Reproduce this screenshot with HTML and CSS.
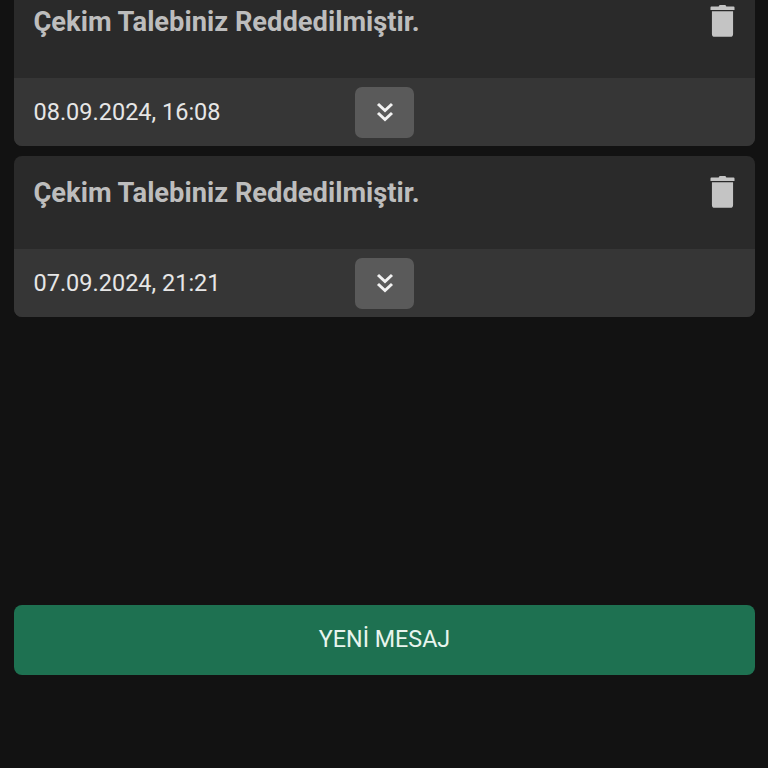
FILE: index.html
```html
<!DOCTYPE html>
<html lang="tr">
<head>
<meta charset="utf-8">
<title>Mesajlar</title>
<link rel="stylesheet" href="styles.css">
</head>
<body>
<main class="page">
  <section class="list">
    <article class="card">
      <div class="card-head">
        <h2 class="title">Çekim Talebiniz Reddedilmiştir.</h2>
        <svg class="trash" viewBox="0 0 26 34" aria-hidden="true"><path d="M9 2.500 10 1h6l1 1.500h7.500a1 1 0 0 1 1 1V6H.5V3.500a1 1 0 0 1 1-1zM2 7.500h22V31a3 3 0 0 1-3 3H5a3 3 0 0 1-3-3z"/></svg>
      </div>
      <div class="card-foot">
        <time class="date">08.09.2024, 16:08</time>
        <button class="expand" type="button" aria-label="Genişlet">
          <svg viewBox="0 0 18 20" aria-hidden="true"><path d="M2 2l7 6.500L16 2M2 11l7 6.500L16 11"/></svg>
        </button>
      </div>
    </article>
    <article class="card">
      <div class="card-head">
        <h2 class="title">Çekim Talebiniz Reddedilmiştir.</h2>
        <svg class="trash" viewBox="0 0 26 34" aria-hidden="true"><path d="M9 2.500 10 1h6l1 1.500h7.500a1 1 0 0 1 1 1V6H.5V3.500a1 1 0 0 1 1-1zM2 7.500h22V31a3 3 0 0 1-3 3H5a3 3 0 0 1-3-3z"/></svg>
      </div>
      <div class="card-foot">
        <time class="date">07.09.2024, 21:21</time>
        <button class="expand" type="button" aria-label="Genişlet">
          <svg viewBox="0 0 18 20" aria-hidden="true"><path d="M2 2l7 6.500L16 2M2 11l7 6.500L16 11"/></svg>
        </button>
      </div>
    </article>
  </section>
  <button class="new-message" type="button">YENİ MESAJ</button>
</main>
</body>
</html>
```
FILE: styles.css
```css
* { box-sizing: border-box; }
html, body { margin: 0; height: 100%; overflow: hidden; }
body { background: #121212; font-family: Roboto, "Liberation Sans", sans-serif; }
.page { display: flex; flex-direction: column; padding: 0 13px 0 14px; }
.list { display: flex; flex-direction: column; gap: 10px; margin-top: -15px; height: 620px; }
.card { height: 161px; display: flex; flex-direction: column; border-radius: 8px; overflow: hidden; background: #2a2a2a; }
.card-head { height: 93px; flex: none; display: flex; justify-content: space-between; align-items: flex-start; padding: 19px 20px 0 19.500px; }
.title { margin: 1px 0 0; font-size: 27.300px; line-height: 34px; font-weight: 700; color: #bdbdbd; }
.trash { width: 25px; height: 33px; fill: #c4c4c4; flex: none; }
.card-foot { flex: 1; display: flex; align-items: center; background: #363636; padding: 0 0 0 19.500px; }
.date { width: 321.500px; font-size: 23.500px; line-height: 30px; color: #e6e6e6; }
.expand { width: 59px; height: 51px; border: 0; border-radius: 7px; background: #5a5a5a; padding: 0; display: flex; align-items: center; justify-content: center; }
.expand svg { width: 18px; height: 20px; fill: none; stroke: #f2f2f2; stroke-width: 3; }
.new-message { height: 70px; width: 741px; border: 0; border-radius: 8px; background: #1e7151; color: #e8f5ee; font-family: inherit; font-size: 23.300px; padding: 0 0 2px; }
```
